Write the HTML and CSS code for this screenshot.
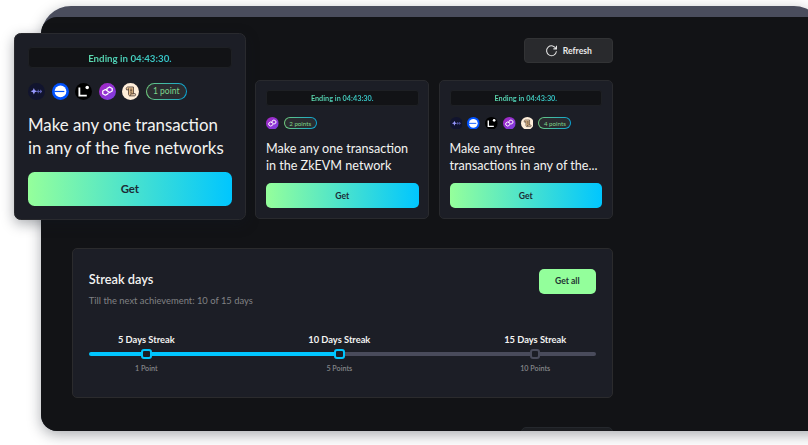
FILE: index.html
```html
<!DOCTYPE html>
<html lang="en">
<head>
<meta charset="utf-8">
<title>Achievements</title>
<link rel="stylesheet" href="styles.css">
</head>
<body>
<svg class="defs" aria-hidden="true">
  <defs>
    <linearGradient id="violet" x1="0" y1="0" x2="1" y2="1"><stop offset="0" stop-color="#a726c1"/><stop offset="1" stop-color="#7b3fe4"/></linearGradient>
    <symbol id="spark" viewBox="0 0 24 24"><circle cx="12" cy="12" r="12" fill="#11142e"/><path d="M8.300 7l1.400 3.300 3.300 1.400-3.300 1.400-1.400 3.300-1.400-3.300-3.300-1.400 3.300-1.400z" fill="#9a9bff"/><path d="M14.500 9.500v5M12.300 12h7.500M17 9.800l2.700 2.200-2.700 2.200" stroke="#5c60b4" stroke-width="1.400" fill="none"/></symbol>
    <symbol id="base" viewBox="0 0 24 24"><circle cx="12" cy="12" r="12" fill="#0052ff"/><circle cx="12" cy="12" r="8.300" fill="#fff"/><path d="M3 12h14.500" stroke="#0052ff" stroke-width="1.700"/></symbol>
    <symbol id="linea" viewBox="0 0 24 24"><circle cx="12" cy="12" r="12" fill="#000"/><path d="M6.200 6.500v11.300h10.500" stroke="#fff" stroke-width="2.600" fill="none"/><circle cx="17.300" cy="6.300" r="2.500" fill="#fff"/></symbol>
    <symbol id="polygon" viewBox="0 0 24 24"><circle cx="12" cy="12" r="12" fill="url(#violet)"/><path d="M12.700 13.700v1.500l-3.700 2.100-3.700-2.100v-3.800L9 9.300l6 4.200 3.700-2.100V7.700L15 5.600l-3.700 2.100v3.500" fill="none" stroke="#fff" stroke-width="1.800" stroke-linejoin="round"/></symbol>
    <symbol id="scroll" viewBox="0 0 24 24"><circle cx="12" cy="12" r="12" fill="#ffeeda"/><path d="M8 6.500h8v10H9.500V9.500H6.500V7.500z" fill="#ebc28e"/><g fill="none" stroke="#4a382d" stroke-width="1.200" stroke-linejoin="round"><path d="M9.300 9.700H6.400c-1.200-3 .6-4 1.600-4h8.200v9.500M9.300 7.500v8.500c0 1.500 1 2.200 2 2.200h6.500c1.500 0 1.800-2 1-3h-6.500c.3 1.500-.2 2.800-1.200 2.800M11.500 8.700h3M11.500 10.800h3M11.500 12.900h3"/></g></symbol>
  </defs>
</svg>
<main class="frame">
  <div class="screen">
    <div class="content">
      <div class="toolbar">
        <button class="refresh"><svg viewBox="0 0 16 16"><path d="M13.700 6A6.100 6.100 0 1 0 14.100 9M14.100 2.200V6h-3.800"/></svg>Refresh</button>
      </div>
      <section class="quests">
        <article class="card">
          <div class="timer"><span>Ending in 04:43:30.</span></div>
          <div class="meta"><svg><use href="#polygon"/></svg><div class="points"><span>2 points</span></div></div>
          <h3>Make any one transaction<br>in the ZkEVM network</h3>
          <button class="get">Get</button>
        </article>
        <article class="card">
          <div class="timer"><span>Ending in 04:43:30.</span></div>
          <div class="meta"><svg><use href="#spark"/></svg><svg><use href="#base"/></svg><svg><use href="#linea"/></svg><svg><use href="#polygon"/></svg><svg><use href="#scroll"/></svg><div class="points"><span>4 points</span></div></div>
          <h3>Make any three<br>transactions in any of the...</h3>
          <button class="get">Get</button>
        </article>
      </section>
      <section class="streak">
        <header>
          <div><h2>Streak days</h2><p>Till the next achievement: 10 of 15 days</p></div>
          <button class="get-all">Get all</button>
        </header>
        <div class="progress">
          <div class="milestone done"><b>5 Days Streak</b><div class="rail"><i></i></div><small>1 Point</small></div>
          <div class="milestone half"><b>10 Days Streak</b><div class="rail"><i></i></div><small>5 Points</small></div>
          <div class="milestone"><b>15 Days Streak</b><div class="rail"><i></i></div><small>10 Points</small></div>
        </div>
      </section>
      <div class="next"></div>
    </div>
  </div>
</main>
<article class="card featured">
  <div class="timer"><span>Ending in 04:43:30.</span></div>
  <div class="meta"><svg><use href="#spark"/></svg><svg><use href="#base"/></svg><svg><use href="#linea"/></svg><svg><use href="#polygon"/></svg><svg><use href="#scroll"/></svg><div class="points"><span>1 point</span></div></div>
  <h3>Make any one transaction<br>in any of the five networks</h3>
  <button class="get">Get</button>
</article>
</body>
</html>
```
FILE: styles.css
```css
* { box-sizing: border-box; }
body {
  margin: 0;
  width: 808px;
  height: 445px;
  padding: 6px 0 0 41px;
  overflow: hidden;
  background: #fff;
  font-family: Lato, "Liberation Sans", sans-serif;
  color: #f3f3f1;
}
h2, h3, p { margin: 0; }
button { font-family: inherit; padding: 0; border: 0; }
.defs { position: absolute; width: 0; height: 0; }

.frame {
  width: 783px;
  height: 425px;
  padding-top: 11px;
  border-radius: 30px 30px 0 16px;
  background: #4a4d5d;
  box-shadow: 0 4px 14px rgba(18, 22, 35, .35);
}
.screen {
  height: 414px;
  padding: 21px 0 0 31px;
  border-radius: 16px 0 0 16px;
  background: #121316;
  overflow: hidden;
}
.content { width: 540.6px; }
.toolbar { display: flex; justify-content: flex-end; }
.refresh {
  display: flex;
  align-items: center;
  justify-content: center;
  gap: 5px;
  width: 88.5px;
  height: 25px;
  border: 1px solid #323335;
  border-radius: 4px;
  background: #292a2d;
  color: #e9e9e9;
  font-size: 8.6px;
  font-weight: 700;
}
.refresh svg { width: 13px; height: 13px; fill: none; stroke: #e4e4e4; stroke-width: 1.3; }

.quests {
  display: flex;
  justify-content: flex-end;
  gap: 10px;
  margin-top: 16.6px;
}
.card {
  width: 17.36em;
  height: 13.9em;
  padding: .95em;
  border: 1px solid #292a2e;
  border-radius: .5em;
  background: #1c1e26;
  font-size: 10px;
}
.timer {
  display: flex;
  align-items: center;
  justify-content: center;
  height: 1.6em;
  border: 1px solid #1e2024;
  border-radius: .3em;
  background: #121316;
}
.timer span {
  width: 100%;
  text-align: center;
  font-size: .73em;
  font-weight: 700;
  background: linear-gradient(90deg, #7eea99, #12b8e4);
  -webkit-background-clip: text;
  background-clip: text;
  color: transparent;
}
.meta { display: flex; align-items: center; gap: .51em; height: 1.27em; margin-top: 1.07em; }
.meta svg { width: 1.27em; height: 1.27em; flex: none; }
.points {
  display: flex;
  align-items: center;
  justify-content: center;
  height: 1.27em;
  width: 3.3em;
  border: 1px solid transparent;
  border-radius: 1em;
  background: linear-gradient(#2a2c30, #2a2c30) padding-box, linear-gradient(90deg, #70c97b, #0aa4d5) border-box;
  color: #7ed48b;
}
.points span { font-size: .62em; white-space: nowrap; }
.card h3 {
  margin-top: 11.6px;
  font-size: 1.26em;
  line-height: 1.32em;
  font-weight: 400;
  white-space: nowrap;
}
.get {
  display: block;
  width: 100%;
  height: 25.2px;
  margin-top: 8.8px;
  border-radius: 5px;
  background: linear-gradient(90deg, #95ff9b, #00c6ff);
  color: #1c2b35;
  font-size: 8.6px;
  font-weight: 700;
}
.featured {
  position: absolute;
  left: 14px;
  top: 33px;
  height: 187px;
  padding: 13px;
  font-size: 13.35px;
  box-shadow: 0 4px 13px rgba(18, 22, 35, .35);
}
.featured .meta { margin-top: 14.5px; gap: 6.6px; }
.card.featured h3 { margin-top: 14.5px; }
.featured .points { width: 41px; }
.featured .points span { font-size: 8.5px; }
.featured .get { font-size: 11.4px; height: 33.8px; margin-top: 13.2px; border-radius: 6.5px; }

.streak {
  height: 150px;
  margin-top: 29.4px;
  padding: 19px 15.8px 0;
  border: 1px solid #2b2b2d;
  border-radius: 5px;
  background: #1c1e26;
}
.streak header { display: flex; justify-content: space-between; }
.streak h2 { margin-top: 3px; font-size: 12.8px; line-height: 17px; font-weight: 600; }
.streak p { margin-top: 7px; font-size: 9.4px; line-height: 12px; color: #808184; }
.get-all {
  width: 57px;
  height: 25px;
  margin-top: 1px;
  border-radius: 5px;
  background: #93ff9b;
  color: #213432;
  font-size: 8.6px;
  font-weight: 700;
}
.progress { display: grid; grid-template-columns: 115px 271px 120.800px; margin-top: 27.300px; }
.milestone { display: flex; flex-direction: column; align-items: center; }
.milestone b { font-size: 9.3px; line-height: 12px; font-weight: 700; white-space: nowrap; }
.milestone small { margin-top: 1.5px; font-size: 7.2px; line-height: 10px; font-weight: 600; color: #85868a; }
.rail {
  display: flex;
  align-items: center;
  justify-content: center;
  align-self: stretch;
  height: 4px;
  margin: 5.700px 0 6.500px;
  background: #494b5b;
}
.rail i {
  flex: none;
  width: 10.500px;
  height: 10.500px;
  border: 2px solid #494b5b;
  border-radius: 3px;
  background: #1c1e26;
}
.done .rail { border-radius: 2px 0 0 2px; background: #00c6ff; }
.half .rail { background: linear-gradient(90deg, #00c6ff 50%, #494b5b 50%); }
.milestone:last-child .rail { border-radius: 0 2px 2px 0; }
.done i, .half i { border-color: #00c6ff; }
.next {
  width: 92px;
  height: 25px;
  margin: 29px 0 0 auto;
  border: 1px solid #25282d;
  border-radius: 5px;
  background: #1c1e22;
}
```
